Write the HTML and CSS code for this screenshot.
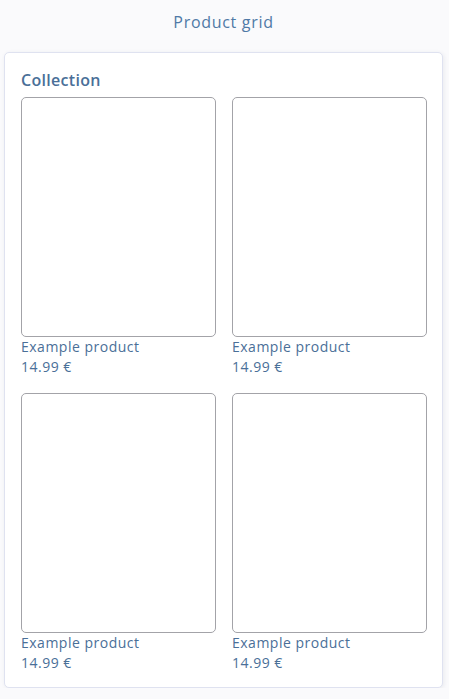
FILE: index.html
```html
<!DOCTYPE html>
<html lang="en">
<head>
  <meta charset="UTF-8">
  <meta name="viewport" content="width=device-width, initial-scale=1.0">
  <title>Product grid</title>
  <link rel="stylesheet" href="styles.css">
</head>
<body>
  <div class="header">Product grid</div>
  <div class="card">
    <h2 class="title">Collection</h2>
    <div class="grid">
      <div class="product">
        <div class="thumb"></div>
        <div class="name">Example product</div>
        <div class="price">14.99 €</div>
      </div>
      <div class="product">
        <div class="thumb"></div>
        <div class="name">Example product</div>
        <div class="price">14.99 €</div>
      </div>
      <div class="product">
        <div class="thumb"></div>
        <div class="name">Example product</div>
        <div class="price">14.99 €</div>
      </div>
      <div class="product">
        <div class="thumb"></div>
        <div class="name">Example product</div>
        <div class="price">14.99 €</div>
      </div>
    </div>
  </div>
</body>
</html>
```

FILE: styles.css
```css
body {
  margin: 0;
  padding: 0 6px 0 4px;
  background: #fafafc;
  font-family: "Open Sans", "Noto Sans", sans-serif;
  color: #4a6f98;
}
.header {
  height: 52px;
  line-height: 44px;
  text-align: center;
  font-size: 16px;
  letter-spacing: 0.7px;
  color: #4f79a6;
}
.card {
  background: #fff;
  border: 1px solid #dfe2f0;
  border-radius: 5px;
  box-shadow: 1px 1px 4px rgba(40, 50, 90, 0.08);
  padding: 15px 15px 14px 16px;
}
.title {
  margin: 0 0 5px;
  font-size: 16px;
  font-weight: 600;
  letter-spacing: 0.3px;
  line-height: 24px;
  color: #4a6f98;
}
.grid {
  display: grid;
  grid-template-columns: 1fr 1fr;
  column-gap: 16px;
  row-gap: 16px;
}
.thumb {
  height: 238px;
  border: 1px solid #a3a3a8;
  border-radius: 5px;
}
.name, .price {
  font-size: 14px;
  letter-spacing: 0.5px;
  line-height: 20px;
}
```
